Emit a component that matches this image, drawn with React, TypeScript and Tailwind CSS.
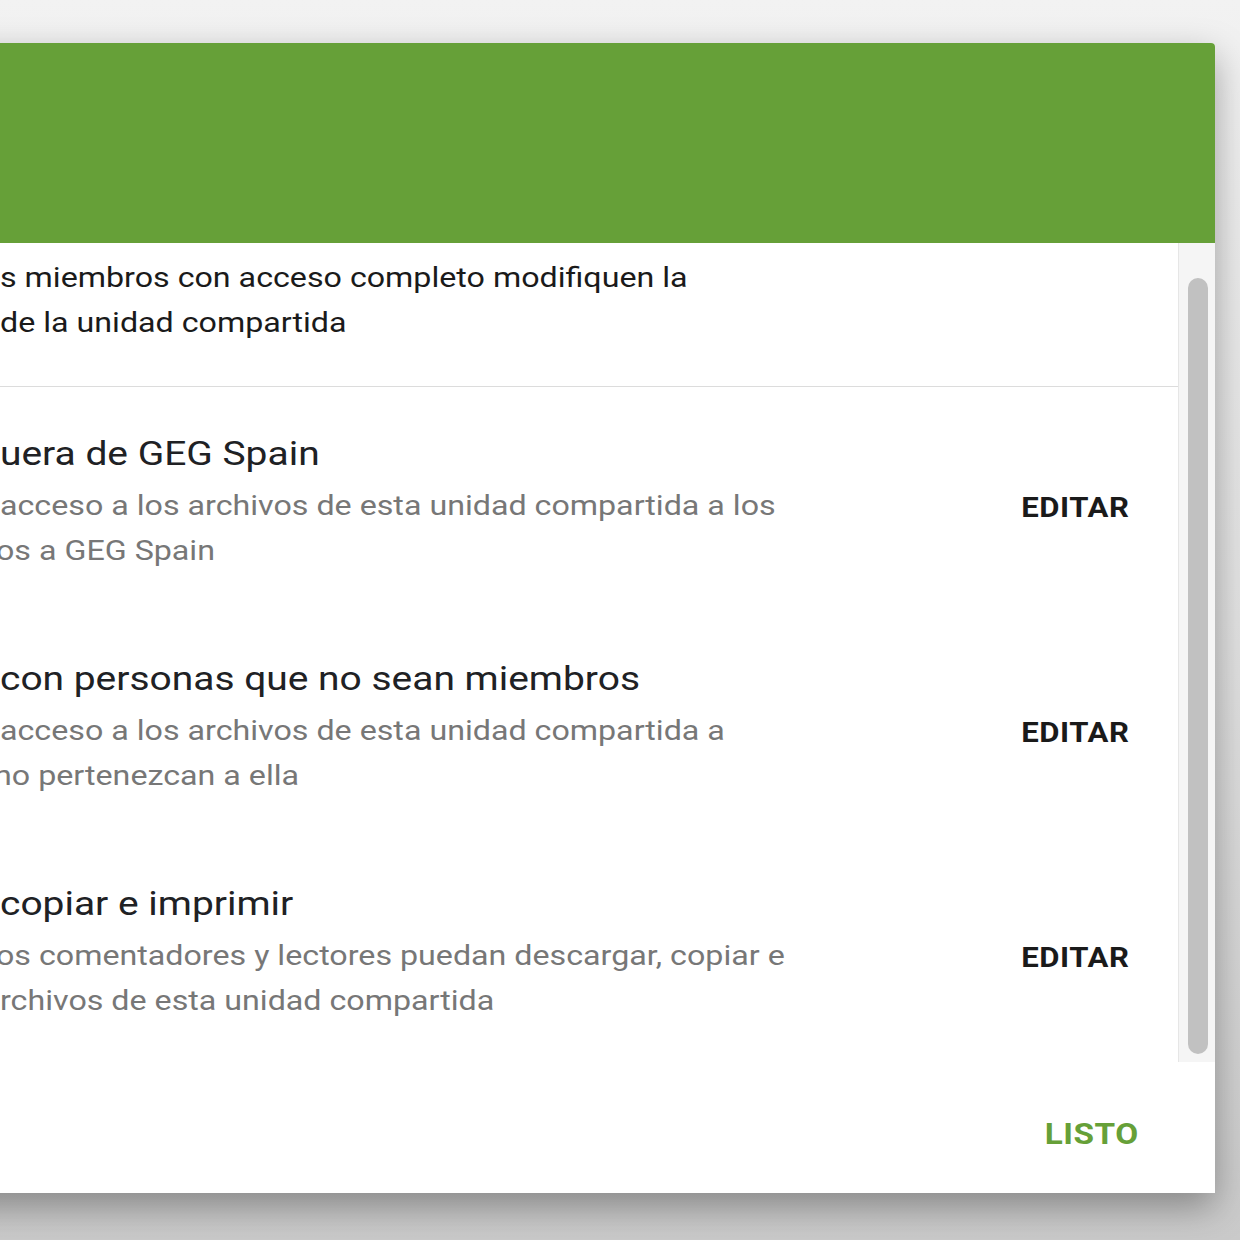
export default function App() {
  const sections = [
    {
      title: 'uera de GEG Spain',
      lines: [
        { text: 'acceso a los archivos de esta unidad compartida a los', shift: '' },
        { text: 'os a GEG Spain', shift: '-ml-[4px]' },
      ],
    },
    {
      title: 'con personas que no sean miembros',
      lines: [
        { text: 'acceso a los archivos de esta unidad compartida a', shift: '' },
        { text: 'no pertenezcan a ella', shift: '-ml-[6px]' },
      ],
    },
    {
      title: 'copiar e imprimir',
      lines: [
        { text: 'os comentadores y lectores puedan descargar, copiar e', shift: '-ml-[4px]' },
        { text: 'rchivos de esta unidad compartida', shift: '' },
      ],
    },
  ];

  return (
    <div className="h-[1240px] w-[1240px] overflow-hidden bg-gradient-to-b from-[#f2f2f2] via-[#e2e2e2] to-[#cacaca] pt-[43px] font-['Roboto',sans-serif]">
      {/* dialog, left part cut off by the window */}
      <div className="-ml-[200px] w-[1415px] overflow-hidden rounded-tr-[4px] bg-white shadow-[0_14px_36px_rgba(0,0,0,0.34)]">
        <div className="h-[200px] bg-[#66a038]" />

        <div className="flex">
          <div className="flex-1 pl-[200px]">
            <div className="border-b border-[#dcdcdc] pt-[12px] pb-[41px] text-[28px] leading-[45px] text-[#1a1a1a]">
              <div className="whitespace-nowrap">
                <span className="inline-block origin-left scale-x-[1.15]">s miembros con acceso completo modifiquen la</span>
              </div>
              <div className="whitespace-nowrap">
                <span className="inline-block origin-left scale-x-[1.15]">de la unidad compartida</span>
              </div>
            </div>

            {sections.map((s) => (
              <div key={s.title} className="flex items-center pt-[45px] pb-[39px] pr-[49px]">
                <div className="flex-1">
                  <div className="whitespace-nowrap text-[33px] leading-[44px] text-[#202124]">
                    <span className="inline-block origin-left scale-x-[1.18]">{s.title}</span>
                  </div>
                  <div className="mt-[7px]">
                    {s.lines.map((l) => (
                      <div
                        key={l.text}
                        className={`whitespace-nowrap text-[28px] leading-[45px] text-[#777777] ${l.shift}`}
                      >
                        <span className="inline-block origin-left scale-x-[1.15]">{l.text}</span>
                      </div>
                    ))}
                  </div>
                </div>
                <button className="mt-[10px] origin-right scale-x-[1.11] text-[28px] font-bold tracking-[0.5px] text-[#1a1a1a]">
                  EDITAR
                </button>
              </div>
            ))}
          </div>

          {/* scrollbar */}
          <div className="w-[37px] border-l border-[#e6e6e6] bg-[#f5f5f5] pt-[35px] pb-[8px] pl-[9px]">
            <div className="h-full w-[20px] rounded-full bg-[#c1c1c1]" />
          </div>
        </div>

        <div className="flex h-[131px] items-center justify-end pt-[11px] pr-[76px]">
          <button className="origin-right scale-x-[1.11] text-[30px] font-bold tracking-[0.5px] text-[#66a038]">
            LISTO
          </button>
        </div>
      </div>
    </div>
  );
}
